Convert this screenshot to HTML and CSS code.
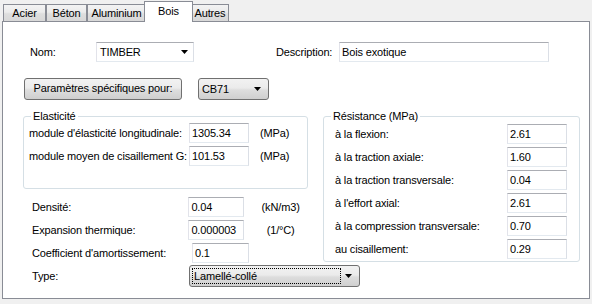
FILE: index.html
```html
<!DOCTYPE html>
<html lang="fr">
<head>
    <meta charset="UTF-8">
    <meta name="viewport" content="width=device-width, initial-scale=1.0">
    <link rel="stylesheet" href="styles.css">
</head>
<body>
    <div class="tabs">
        <div class="tab tab-acier">Acier</div>
        <div class="tab tab-beton">Béton</div>
        <div class="tab tab-alu">Aluminium</div>
        <div class="tab tab-bois active">Bois</div>
        <div class="tab tab-autres">Autres</div>
    </div>

    <div class="panel">
        <div class="row row-name">
            <span class="lbl lbl-nom">Nom:</span>
            <div class="combo combo-edit combo-nom">
                <span class="combo-text">TIMBER</span>
                <svg class="arrow" width="7" height="4"><path d="M0 0h7L3.5 4z"/></svg>
            </div>
            <span class="lbl lbl-desc">Description:</span>
            <div class="field field-desc">Bois exotique</div>
        </div>

        <div class="row row-params">
            <div class="btn btn-params">Paramètres spécifiques pour:</div>
            <div class="combo combo-list combo-cb">
                <span class="combo-text">CB71</span>
                <svg class="arrow" width="7" height="4"><path d="M0 0h7L3.5 4z"/></svg>
            </div>
        </div>

        <div class="columns">
            <div class="col-left">
                <fieldset class="group group-elast">
                    <legend>Elasticité</legend>
                    <div class="prop">
                        <span class="prop-label">module d'élasticité longitudinale:</span>
                        <div class="field num">1305.34</div>
                        <span class="unit">(MPa)</span>
                    </div>
                    <div class="prop">
                        <span class="prop-label">module moyen de cisaillement G:</span>
                        <div class="field num">101.53</div>
                        <span class="unit">(MPa)</span>
                    </div>
                </fieldset>

                <div class="misc">
                    <div class="prop">
                        <span class="prop-label">Densité:</span>
                        <div class="field num">0.04</div>
                        <span class="unit">(kN/m3)</span>
                    </div>
                    <div class="prop">
                        <span class="prop-label">Expansion thermique:</span>
                        <div class="field num">0.000003</div>
                        <span class="unit">(1/°C)</span>
                    </div>
                    <div class="prop">
                        <span class="prop-label">Coefficient d'amortissement:</span>
                        <div class="field num">0.1</div>
                    </div>
                </div>
            </div>

            <fieldset class="group group-resist">
                <legend>Résistance (MPa)</legend>
                <div class="prop">
                    <span class="prop-label">à la flexion:</span>
                    <div class="field num">2.61</div>
                </div>
                <div class="prop">
                    <span class="prop-label">à la traction axiale:</span>
                    <div class="field num">1.60</div>
                </div>
                <div class="prop">
                    <span class="prop-label">à la traction transversale:</span>
                    <div class="field num">0.04</div>
                </div>
                <div class="prop">
                    <span class="prop-label">à l'effort axial:</span>
                    <div class="field num">2.61</div>
                </div>
                <div class="prop">
                    <span class="prop-label">à la compression transversale:</span>
                    <div class="field num">0.70</div>
                </div>
                <div class="prop">
                    <span class="prop-label">au cisaillement:</span>
                    <div class="field num">0.29</div>
                </div>
            </fieldset>
        </div>

        <div class="row row-type">
            <span class="lbl lbl-type">Type:</span>
            <div class="combo combo-list combo-type">
                <span class="focus-box">Lamellé-collé</span>
                <svg class="arrow" width="7" height="4"><path d="M0 0h7L3.5 4z"/></svg>
            </div>
        </div>
    </div>
</body>
</html>
```

FILE: styles.css
```css
body {
    margin: 0;
    background: #f0f0f0;
    font: 11px "Liberation Sans", Arial, sans-serif;
    letter-spacing: -0.15px;
    color: #000;
}

/* tab strip */
.tabs {
    display: flex;
    align-items: flex-end;
    height: 21px;
    padding-left: 3px;
}

.tab {
    box-sizing: border-box;
    height: 17px;
    line-height: 17px;
    text-align: center;
    border: 1px solid #898c95;
    border-bottom: none;
    background: linear-gradient(#f3f3f3, #ebebeb 45%, #dedede 55%, #d8d8d8);
}

.tab-acier { width: 43px; }
.tab-beton { width: 41px; }
.tab-alu { width: 59px; }
.tab-autres { width: 38px; }

.tab.active {
    width: 49px;
    height: 21px;
    line-height: 18px;
    margin: 0 -2px -1px;
    background: #fff;
    position: relative;
    z-index: 1;
}

.panel {
    box-sizing: border-box;
    height: 278px;
    margin: 0 2px;
    border: 1px solid #898c95;
    background: #fff;
}

.row {
    display: flex;
    align-items: center;
}

/* nom / description */
.row-name {
    margin-top: 20px;
    padding-left: 27px;
}

.lbl-nom { width: 66px; }

.lbl-desc {
    width: 63px;
    margin-left: 82px;
}

.field {
    box-sizing: border-box;
    height: 20px;
    padding: 2px 2px 0;
    line-height: 15px;
    border: 1px solid;
    border-color: #abadb3 #dbdfe6 #e3e9ef #e2e3ea;
    background: #fff;
    white-space: nowrap;
}

.field-desc { width: 210px; }

.combo {
    box-sizing: border-box;
    display: flex;
    align-items: center;
    justify-content: space-between;
}

.combo-edit {
    height: 20px;
    padding: 0 3px 0 3px;
    border: 1px solid;
    border-color: #abadb3 #dbdfe6 #e3e9ef #e2e3ea;
    background: #fff;
}

.combo-nom { width: 98px; }
.combo-nom .arrow { margin-right: 2px; }

.combo-list {
    height: 22px;
    padding: 0 7px 0 3px;
    border: 1px solid #707070;
    border-radius: 3px;
    background: linear-gradient(#f2f2f2, #ebebeb 45%, #dddddd 55%, #cfcfcf);
}

.combo-text { padding-bottom: 1px; }

/* parametres */
.row-params {
    margin-top: 16px;
    padding-left: 21px;
}

.btn {
    box-sizing: border-box;
    width: 158px;
    height: 22px;
    line-height: 19px;
    text-align: center;
    border: 1px solid #707070;
    border-radius: 3px;
    background: linear-gradient(#f2f2f2, #ebebeb 45%, #dddddd 55%, #cfcfcf);
}

.combo-cb {
    width: 71px;
    margin-left: 16px;
}

/* groups */
.columns {
    display: flex;
    align-items: flex-start;
    gap: 15px;
    margin-top: 10px;
    padding-left: 20px;
}

.col-left { width: 285px; }

.group {
    box-sizing: border-box;
    margin: 0;
    padding: 0;
    min-width: 0;
    border: 1px solid #d5dfe5;
    border-radius: 3px;
}

.group legend {
    padding: 0 2px;
    line-height: 12px;
}

.prop {
    display: flex;
    align-items: center;
}

.prop-label { white-space: nowrap; }

.num { width: 60px; }

.group-elast {
    width: 285px;
    padding: 1px 0 22px 5px;
}

.group-elast legend { margin-left: 2px; }
.group-elast .prop + .prop { margin-top: 3px; }
.group-elast .prop-label { width: 160px; }
.group-elast .unit { margin-left: 11px; }

.misc {
    margin-top: 8px;
    padding-left: 9px;
}

.misc .prop + .prop { margin-top: 3px; }
.misc .prop-label { width: 160px; }
.misc .num { width: 57px; }

.misc .unit {
    width: 56px;
    margin-left: 9px;
    text-align: center;
}

.group-resist {
    width: 257px;
    padding: 2px 12px 2px 11px;
}

.group-resist legend { margin-left: -4px; }
.group-resist .prop { justify-content: space-between; }
.group-resist .prop + .prop { margin-top: 3px; }

/* type */
.row-type {
    margin-top: 2px;
    padding-left: 29px;
}

.lbl-type { width: 157px; }

.combo-type {
    width: 171px;
    padding: 0 7px 0 2px;
}

.focus-box {
    box-sizing: border-box;
    width: 149px;
    height: 16px;
    line-height: 14px;
    padding-left: 1px;
    border: 1px dotted #000;
}
```
